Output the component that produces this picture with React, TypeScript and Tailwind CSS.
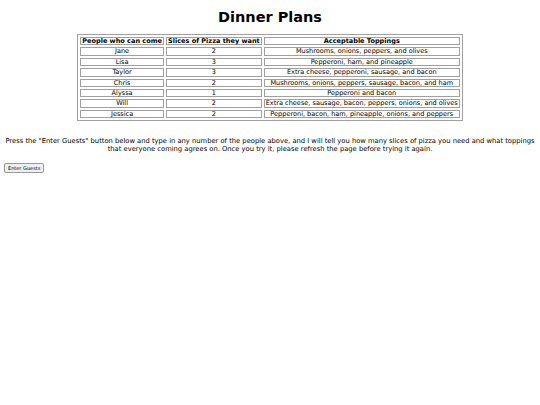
const guests = [
  { name: "Jane", slices: 2, toppings: "Mushrooms, onions, peppers, and olives" },
  { name: "Lisa", slices: 3, toppings: "Pepperoni, ham, and pineapple" },
  { name: "Taylor", slices: 3, toppings: "Extra cheese, pepperoni, sausage, and bacon" },
  { name: "Chris", slices: 2, toppings: "Mushrooms, onions, peppers, sausage, bacon, and ham" },
  { name: "Alyssa", slices: 1, toppings: "Pepperoni and bacon" },
  { name: "Will", slices: 2, toppings: "Extra cheese, sausage, bacon, peppers, onions, and olives" },
  { name: "Jessica", slices: 2, toppings: "Pepperoni, bacon, ham, pineapple, onions, and peppers" },
];

export default function App() {
  return (
    <div className="min-h-[405px] bg-white px-[4px] text-black" style={{ fontFamily: '"DejaVu Sans", Verdana, sans-serif' }}>
      <h1 className="pt-[8px] text-center text-[14.5px] font-bold leading-[18px]">Dinner Plans</h1>

      {/* tabla con el look clásico de border=1 */}
      <table className="mx-auto mt-[8px] border-separate border-spacing-[2px] border border-[#a0a0a0] text-[6.55px] leading-[6.4px]">
        <thead>
          <tr>
            <th className="border border-[#a0a0a0] px-[1px] font-bold">People who can come</th>
            <th className="border border-[#a0a0a0] px-[1px] font-bold">Slices of Pizza they want</th>
            <th className="border border-[#a0a0a0] px-[1px] font-bold">Acceptable Toppings</th>
          </tr>
        </thead>
        <tbody>
          {guests.map((g) => (
            <tr key={g.name}>
              <td className="border border-[#a0a0a0] px-[1px] text-center">{g.name}</td>
              <td className="border border-[#a0a0a0] px-[1px] text-center">{g.slices}</td>
              <td className="border border-[#a0a0a0] px-[1px] text-center">{g.toppings}</td>
            </tr>
          ))}
        </tbody>
      </table>

      <p className="mt-[16px] text-center text-[6.75px] leading-[8px]">
        Press the "Enter Guests" button below and type in any number of the people above, and I will tell you how many slices of pizza you need and what toppings that everyone coming agrees on. Once you try it, please refresh the page before trying it again.
      </p>

      <button className="-mt-[2px] rounded-[2px] border border-[#999] bg-[#efefef] px-[3px] py-[1px] text-[5px] leading-[6px]">
        Enter Guests
      </button>
    </div>
  );
}
